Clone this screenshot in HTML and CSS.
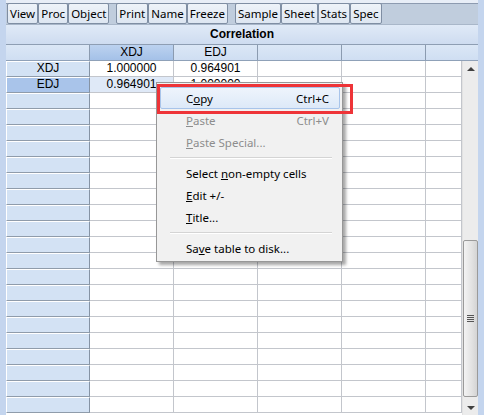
FILE: index.html
```html
<!DOCTYPE html>
<html lang="en">
<head>
    <meta charset="UTF-8">
    <title>Correlation</title>
    <link rel="stylesheet" href="styles.css">
</head>
<body>
    <div class="window">
        <div class="edge"></div>
        <div class="main">
            <div class="toolbar">
                <div class="group">
                    <button>View</button><button>Proc</button><button>Object</button>
                </div>
                <div class="group">
                    <button>Print</button><button>Name</button><button>Freeze</button>
                </div>
                <div class="group">
                    <button>Sample</button><button>Sheet</button><button>Stats</button><button>Spec</button>
                </div>
            </div>
            <div class="title">Correlation</div>
            <div class="header">
                <div class="hcell corner"></div>
                <div class="hcell selected">XDJ</div>
                <div class="hcell">EDJ</div>
                <div class="hcell"></div>
                <div class="hcell"></div>
                <div class="hcell last"></div>
            </div>
            <div class="body">
                <div class="grid" id="grid">
                    <div class="row">
                        <div class="rowhead">XDJ</div>
                        <div class="cell">1.000000</div>
                        <div class="cell">0.964901</div>
                        <div class="cell"></div>
                        <div class="cell"></div>
                        <div class="cell"></div>
                    </div>
                    <div class="row">
                        <div class="rowhead selected">EDJ</div>
                        <div class="cell picked">0.964901</div>
                        <div class="cell">1.000000</div>
                        <div class="cell"></div>
                        <div class="cell"></div>
                        <div class="cell"></div>
                    </div>
                </div>
                <div class="scrollbar">
                    <div class="arrow up"></div>
                    <div class="track">
                        <div class="thumb"><span class="grip"></span></div>
                    </div>
                    <div class="arrow down"></div>
                </div>
            </div>
        </div>
        <div class="edge"></div>

        <div class="menu">
            <div class="item active"><span>C<u>o</u>py</span><span>Ctrl+C</span></div>
            <div class="item disabled"><span><u>P</u>aste</span><span>Ctrl+V</span></div>
            <div class="item disabled"><span><u>P</u>aste Special...</span></div>
            <div class="sep"></div>
            <div class="item"><span>Select <u>n</u>on-empty cells</span></div>
            <div class="item"><span><u>E</u>dit +/-</span></div>
            <div class="item"><span><u>T</u>itle...</span></div>
            <div class="sep"></div>
            <div class="item"><span>Sa<u>v</u>e table to disk...</span></div>
        </div>
        <div class="highlight"></div>
    </div>

    <script>
        // fill the rest of the sheet with empty rows
        const grid = document.getElementById('grid');
        for (let i = 0; i < 20; i++) {
            const row = document.createElement('div');
            row.className = 'row';
            row.innerHTML = '<div class="rowhead"></div>' + '<div class="cell"></div>'.repeat(5);
            grid.appendChild(row);
        }
    </script>
</body>
</html>
```

FILE: styles.css
```css
* {
    margin: 0;
    padding: 0;
    box-sizing: border-box;
}

body {
    width: 484px;
    height: 415px;
    overflow: hidden;
    background: #ffffff;
    font-family: 'Liberation Sans', Arial, sans-serif;
    font-size: 12px;
    color: #000;
}

.window {
    position: relative;
    display: flex;
    width: 484px;
    height: 415px;
}

.edge {
    width: 6px;
    background: #c4d5ee;
}

.main {
    width: 472px;
    display: flex;
    flex-direction: column;
}

.toolbar {
    height: 25px;
    display: flex;
    align-items: flex-start;
    gap: 7px;
    padding: 3px 0 0 1px;
    background: linear-gradient(#e8eef7 0 3px, #8d9bb0 3px 4px, #c0cddd 4px);
    border-bottom: 1px solid #a9b7c9;
}

.group {
    display: flex;
}

.toolbar button {
    height: 21px;
    padding: 0 2px;
    border: 1px solid #7f8ea3;
    border-radius: 2px;
    background: linear-gradient(#eef3f9, #dde6f1);
    font-family: 'Noto Sans', 'Open Sans', sans-serif;
    font-size: 11.5px;
    line-height: 18px;
    color: #000;
}

.title {
    height: 20px;
    line-height: 19px;
    text-align: center;
    font-weight: bold;
    font-size: 12px;
    background: linear-gradient(#e0eaf7, #cedcf0);
    border-bottom: 1px solid #8e9eb3;
}

.header {
    height: 16px;
    display: flex;
    background: linear-gradient(#dbe7f6, #cfdef2);
    border-bottom: 1px solid #8fa1b8;
}

.hcell {
    width: 84px;
    line-height: 15px;
    text-align: center;
    border-right: 1px solid #8b9bb0;
}

.hcell.selected {
    background: linear-gradient(#bcd2ef, #a4c1e8);
}

.hcell.last {
    flex: 1;
    border-right: none;
}

.body {
    flex: 1;
    display: flex;
    overflow: hidden;
}

.grid {
    width: 456px;
}

.row {
    display: grid;
    grid-template-columns: 84px 84px 84px 84px 84px 36px;
    height: 16px;
}

.rowhead {
    background: #d3e2f4;
    border-top: 1px solid #ffffff;
    border-left: 1px solid #ffffff;
    border-bottom: 1px solid #8f9cab;
    border-right: 1px solid #8593a4;
    text-align: center;
    line-height: 13px;
}

.rowhead.selected {
    background: #a9c4ea;
}

.cell {
    border-right: 1px solid #c3c6cc;
    border-bottom: 1px solid #c3c6cc;
    text-align: center;
    line-height: 15px;
}

.cell.picked {
    background: #dfe9f7;
}

.scrollbar {
    width: 16px;
    display: flex;
    flex-direction: column;
    background: #ececec;
    border-left: 1px solid #e2e2e2;
}

.arrow {
    height: 17px;
    position: relative;
}

.arrow::after {
    content: '';
    position: absolute;
    left: 4px;
    border-left: 4px solid transparent;
    border-right: 4px solid transparent;
}

.arrow.up::after {
    top: 6px;
    border-bottom: 4px solid #404040;
}

.arrow.down::after {
    top: 8px;
    border-top: 4px solid #404040;
}

.track {
    flex: 1;
    display: flex;
    flex-direction: column;
    justify-content: flex-end;
    padding-bottom: 1px;
}

.thumb {
    height: 157px;
    border: 1px solid #9a9a9a;
    border-radius: 2px;
    background: linear-gradient(90deg, #f3f3f3, #e2e2e2 60%, #d4d4d4);
    display: flex;
    align-items: center;
    justify-content: center;
}

.grip {
    width: 7px;
    height: 7px;
    background: repeating-linear-gradient(#555 0 1px, transparent 1px 2px);
}

.menu {
    position: absolute;
    left: 156px;
    top: 82px;
    width: 187px;
    padding: 4px 2px 2px 3px;
    background: #f1f1f1;
    border: 1px solid #979797;
    box-shadow: 3px 3px 3px rgba(0, 0, 0, 0.35);
    font-family: 'Noto Sans', 'Open Sans', sans-serif;
    font-size: 11.5px;
}

.item {
    height: 22px;
    display: flex;
    justify-content: space-between;
    align-items: center;
    padding: 0 10px 0 25px;
    border: 1px solid transparent;
    border-radius: 2px;
}

.item.active {
    background: linear-gradient(#eef4fc, #dde9f8);
    border-color: #a8c4ea;
}

.item.disabled {
    color: #8d8d8d;
}

.sep {
    height: 1px;
    margin: 4px 8px 3px 10px;
    background: #d4d4d4;
    border-bottom: 1px solid #ffffff;
    box-sizing: content-box;
}

.highlight {
    position: absolute;
    left: 157px;
    top: 84px;
    width: 196px;
    height: 30px;
    border: 3px solid #ee3438;
}
```
